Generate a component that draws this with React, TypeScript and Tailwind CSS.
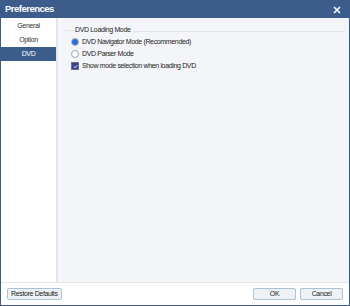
import React, { useState } from 'react';

const font = { fontFamily: '"Liberation Sans", Arial, sans-serif' };

const tabs = ['General', 'Option', 'DVD'];

const App: React.FC = () => {
  const [tab, setTab] = useState('DVD');
  const [mode, setMode] = useState<'nav' | 'parser'>('nav');
  const [showSel, setShowSel] = useState(true);

  return (
    <div className="w-[350px] h-[306px] flex flex-col bg-[#3c5d8c] p-px text-[#222] tracking-[-0.35px]" style={font}>
      {/* Title bar */}
      <div className="h-[17px] flex items-center justify-between pl-[4px] pr-[8px] shrink-0">
        <span className="text-white font-bold text-[9.5px] tracking-[-0.5px]">Preferences</span>
        <svg width="8" height="8" viewBox="0 0 8 8">
          <path d="M1 1 L7 7 M7 1 L1 7" stroke="#fff" strokeWidth="1.6" />
        </svg>
      </div>

      <div className="flex-1 flex flex-col bg-white">
        <div className="flex-1 flex">
          {/* Sidebar */}
          <div className="w-[55px] bg-white flex flex-col pt-px">
            {tabs.map((t) => (
              <button
                key={t}
                onClick={() => setTab(t)}
                className={`h-[14px] text-[7px] flex items-center justify-center ${
                  tab === t ? 'bg-[#3c5d8c] text-white' : 'text-[#333]'
                }`}
              >
                {t}
              </button>
            ))}
          </div>
          <div className="w-[2px] bg-[#e3e3ee]" />

          {/* Content */}
          <div className="flex-1 bg-[#f4f5f8] pl-[7px] pr-[4px] pt-[7px]">
            <div className="flex items-center">
              <div className="w-[9px] h-px bg-[#e2e3ea]" />
              <span className="text-[7px] px-[1px]">DVD Loading Mode</span>
              <div className="flex-1 h-px bg-[#e2e3ea] mt-[3px]" />
            </div>
            <div className="flex flex-col gap-[3px] pl-[6px] pt-[2px] text-[7px]">
              <label className="flex items-center gap-[3px] h-[9px]" onClick={() => setMode('nav')}>
                <span className="w-[8px] h-[8px] rounded-full border border-[#9aa3b8] bg-white flex items-center justify-center">
                  {mode === 'nav' && <span className="w-[6px] h-[6px] rounded-full bg-[#2f6ed6]" />}
                </span>
                DVD Navigator Mode (Recommended)
              </label>
              <label className="flex items-center gap-[3px] h-[9px]" onClick={() => setMode('parser')}>
                <span className="w-[8px] h-[8px] rounded-full border border-[#9aa3b8] bg-white flex items-center justify-center">
                  {mode === 'parser' && <span className="w-[6px] h-[6px] rounded-full bg-[#2f6ed6]" />}
                </span>
                DVD Parser Mode
              </label>
              <label className="flex items-center gap-[3px] h-[9px]" onClick={() => setShowSel(!showSel)}>
                <span className="w-[8px] h-[8px] border border-[#6a6f9a] bg-white flex items-center justify-center">
                  {showSel && (
                    <span className="w-[6px] h-[6px] bg-[#3a3f8c] flex items-center justify-center">
                      <svg width="5" height="5" viewBox="0 0 5 5">
                        <path d="M0.8 2.6 L2 3.7 L4.2 1.2" stroke="#fff" strokeWidth="0.9" fill="none" />
                      </svg>
                    </span>
                  )}
                </span>
                Show mode selection when loading DVD
              </label>
            </div>
          </div>
        </div>

        {/* Footer */}
        <div className="h-[23px] border-t border-[#e3e3ea] bg-white flex items-center justify-between px-[6px]">
          <button className="h-[12px] px-[3px] text-[7px] rounded-[2px] border border-[#a9c3d6] bg-[#eef2f6]">
            Restore Defaults
          </button>
          <div className="flex gap-[4px]">
            <button className="w-[43px] h-[12px] text-[7px] rounded-[2px] border border-[#a9c3d6] bg-[#eef2f6]">OK</button>
            <button className="w-[43px] h-[12px] text-[7px] rounded-[2px] border border-[#a9c3d6] bg-[#eef2f6]">Cancel</button>
          </div>
        </div>
      </div>
    </div>
  );
};

export default App;
